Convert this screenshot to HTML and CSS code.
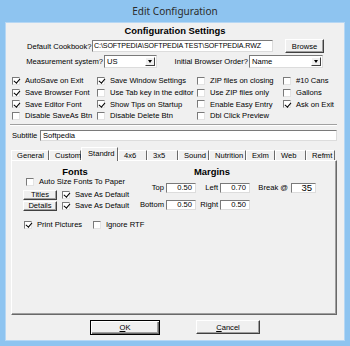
FILE: index.html
```html
<!DOCTYPE html>
<html>
  <head>
    <meta charset="UTF-8">
    <title>Edit Configuration</title>
    <link rel="stylesheet" href="styles.css">
  </head>
  <body>
  <div class="window">
    <div class="titlebar">Edit Configuration</div>
    <div class="client">
      <h1 class="heading">Configuration Settings</h1>

      <div class="row row-cookbook">
        <span class="lbl lbl-cookbook">Default Cookbook?</span>
        <div class="field field-path">C:\SOFTPEDIA\SOFTPEDIA TEST\SOFTPEDIA.RWZ</div>
        <button class="btn btn-browse">Browse</button>
      </div>

      <div class="row row-measure">
        <span class="lbl lbl-measure">Measurement system?</span>
        <div class="combo combo-measure"><span class="value">US</span><span class="drop"></span></div>
        <span class="lbl lbl-order">Initial Browser Order?</span>
        <div class="combo combo-order"><span class="value">Name</span><span class="drop"></span></div>
      </div>

      <div class="checks">
        <label class="chk"><span class="box on"></span>AutoSave on Exit</label>
        <label class="chk"><span class="box on"></span>Save Browser Font</label>
        <label class="chk"><span class="box on"></span>Save Editor Font</label>
        <label class="chk"><span class="box"></span>Disable SaveAs Btn</label>

        <label class="chk"><span class="box on"></span>Save Window Settings</label>
        <label class="chk"><span class="box"></span>Use Tab key in the editor</label>
        <label class="chk"><span class="box on"></span>Show Tips on Startup</label>
        <label class="chk"><span class="box"></span>Disable Delete Btn</label>

        <label class="chk"><span class="box"></span>ZIP files on closing</label>
        <label class="chk"><span class="box"></span>Use ZIP files only</label>
        <label class="chk"><span class="box"></span>Enable Easy Entry</label>
        <label class="chk"><span class="box"></span>Dbl Click Preview</label>

        <label class="chk"><span class="box"></span>#10 Cans</label>
        <label class="chk"><span class="box"></span>Gallons</label>
        <label class="chk"><span class="box on"></span>Ask on Exit</label>
      </div>

      <div class="etched"></div>

      <div class="row row-subtitle">
        <span class="lbl-subtitle">Subtitle</span>
        <div class="field field-subtitle">Softpedia</div>
      </div>

      <div class="tabs">
        <div class="tab t-general">General</div>
        <div class="tab t-custom">Custom</div>
        <div class="tab t-standrd active">Standrd</div>
        <div class="tab t-4x6">4x6</div>
        <div class="tab t-3x5">3x5</div>
        <div class="tab t-sound">Sound</div>
        <div class="tab t-nutrition">Nutrition</div>
        <div class="tab t-exlm">Exlm</div>
        <div class="tab t-web">Web</div>
        <div class="tab t-refmt">Refmt</div>
      </div>

      <div class="panel">
        <div class="panel-cols">
          <div class="fonts">
            <div class="group-title">Fonts</div>
            <label class="chk auto-row"><span class="box"></span>Auto Size Fonts To Paper</label>
            <div class="font-row first">
              <button class="btn btn-small">Titles</button>
              <label class="chk"><span class="box on"></span>Save As Default</label>
            </div>
            <div class="font-row">
              <button class="btn btn-small">Details</button>
              <label class="chk"><span class="box on"></span>Save As Default</label>
            </div>
          </div>

          <div class="margins">
            <div class="group-title">Margins</div>
            <div class="margin-row first">
              <span class="mlbl mlbl-a">Top</span>
              <div class="field num">0.50</div>
              <span class="mlbl mlbl-b">Left</span>
              <div class="field num">0.70</div>
              <span class="mlbl mlbl-c">Break @</span>
              <div class="field num num-break">35</div>
            </div>
            <div class="margin-row second">
              <span class="mlbl mlbl-a">Bottom</span>
              <div class="field num">0.50</div>
              <span class="mlbl mlbl-b">Right</span>
              <div class="field num">0.50</div>
            </div>
          </div>
        </div>

        <div class="print-row">
          <label class="chk"><span class="box on"></span>Print Pictures</label>
          <label class="chk"><span class="box"></span>Ignore RTF</label>
        </div>
      </div>

      <div class="actions">
        <button class="btn btn-ok"><u>O</u>K</button>
        <button class="btn btn-cancel"><u>C</u>ancel</button>
      </div>
    </div>
  </div>
  </body>
</html>
```

FILE: styles.css
```css
* {
  box-sizing: border-box;
  }

body {
  margin: 0;
  font-family: "Liberation Sans", Arial, sans-serif;
  font-size: 7.6px;
  color: #000000;
  }

.window {
  width: 350px;
  height: 346px;
  padding: 0 5px 5px;
  background-color: #8ec4f0;
  display: flex;
  flex-direction: column;
  }

.titlebar {
  height: 22px;
  line-height: 22px;
  text-align: center;
  font-family: "Noto Sans", sans-serif;
  font-size: 10px;
  color: #2b2b2b;
  }

.client {
  flex: 1;
  background-color: #f0f0f0;
  border: 1px solid #b6d7f4;
  display: flex;
  flex-direction: column;
  }

.heading {
  margin: 2px 0 0;
  font-size: 9.4px;
  font-weight: bold;
  line-height: 12px;
  text-align: center;
  }

/* rows of label + control */
.row {
  display: flex;
  align-items: center;
  }

.lbl {
  text-align: right;
  white-space: nowrap;
  padding-right: 1px;
  }

.row-cookbook {
  margin-top: 2px;
  height: 14px;
  padding-left: 21px;
  }

.lbl-cookbook { width: 65px; }

.field {
  height: 12px;
  line-height: 10px;
  padding: 0 2px;
  background-color: #ffffff;
  border: 1px solid;
  border-color: #7a7a7a #dcdcdc #dcdcdc #7a7a7a;
  white-space: nowrap;
  overflow: hidden;
  }

.field-path {
  width: 181px;
  padding-left: 1px;
  font-size: 7.1px;
  letter-spacing: -0.1px;
  }

.btn {
  padding: 0;
  font: inherit;
  color: #000000;
  text-align: center;
  background-color: #f0f0f0;
  border: 1px solid;
  border-color: #ffffff #404040 #404040 #ffffff;
  box-shadow: inset -1px -1px 0 #a0a0a0;
  }

.btn-browse {
  width: 39px;
  height: 14px;
  margin-left: 12px;
  }

.row-measure {
  margin-top: 2px;
  height: 13px;
  padding-left: 20px;
  }

.lbl-measure { width: 78px; }

.lbl-order {
  width: 78px;
  margin-left: 14px;
  }

.combo {
  height: 13px;
  padding-left: 2px;
  display: flex;
  align-items: center;
  background-color: #ffffff;
  border: 1px solid;
  border-color: #7a7a7a #dcdcdc #dcdcdc #7a7a7a;
  }

.combo-measure { width: 53px; }
.combo-order { width: 74px; }

.combo .value { flex: 1; }

.drop {
  width: 10px;
  height: 9px;
  margin-right: 1px;
  display: flex;
  align-items: center;
  justify-content: center;
  background-color: #f0f0f0;
  border: 1px solid;
  border-color: #ffffff #404040 #404040 #ffffff;
  }

.drop::after {
  content: "";
  border-style: solid;
  border-width: 3px 2.5px 0 2.5px;
  border-color: #000000 transparent transparent transparent;
  }

/* checkboxes */
.chk {
  display: flex;
  align-items: center;
  gap: 5px;
  white-space: nowrap;
  }

.box {
  flex: none;
  position: relative;
  width: 8px;
  height: 8px;
  background-color: #ffffff;
  border: 1px solid;
  border-color: #7a7a7a #e3e3e3 #e3e3e3 #7a7a7a;
  }

.box.on::after {
  content: "";
  position: absolute;
  left: 2px;
  top: -0.5px;
  width: 2.5px;
  height: 5px;
  border: solid #000000;
  border-width: 0 1.5px 1.5px 0;
  transform: rotate(40deg);
  }

.checks {
  margin-top: 7px;
  padding-left: 6px;
  display: grid;
  grid-template-columns: 85px 100px 86px 1fr;
  grid-template-rows: repeat(4, 11.7px);
  grid-auto-flow: column;
  }

.etched {
  margin: 2px 7px 0 4px;
  height: 2px;
  border-top: 1px solid #a0a0a0;
  border-bottom: 1px solid #ffffff;
  }

.row-subtitle {
  margin-top: 4px;
  height: 11px;
  padding-left: 6px;
  }

.lbl-subtitle { width: 28px; }

.field-subtitle {
  width: 297px;
  height: 11px;
  line-height: 9px;
  }

/* tabs */
.tabs {
  margin-top: 6px;
  height: 13px;
  padding-left: 5px;
  display: flex;
  align-items: flex-start;
  position: relative;
  z-index: 1;
  }

.tab {
  margin-top: 3px;
  height: 10px;
  padding-left: 5px;
  line-height: 9px;
  white-space: nowrap;
  border-top: 1px solid #ffffff;
  border-left: 1px solid #ffffff;
  border-right: 1px solid #696969;
  }

.tab.active {
  margin-top: 0;
  height: 14px;
  line-height: 11px;
  padding-left: 6px;
  background-color: #f0f0f0;
  }

.t-general { width: 38px; }
.t-custom { width: 32px; }
.t-standrd { width: 37px; }
.t-4x6 { width: 29px; }
.t-3x5 { width: 31px; }
.t-sound { width: 31px; }
.t-nutrition { width: 37px; }
.t-exlm { width: 29px; }
.t-web { width: 31px; }
.t-refmt { width: 29px; }

.panel {
  margin-left: 5px;
  width: 326px;
  height: 155px;
  padding-top: 5px;
  border-top: 1px solid #ffffff;
  border-left: 1px solid #ffffff;
  border-right: 1px solid #696969;
  border-bottom: 1px solid #696969;
  box-shadow: inset -1px -1px 0 #a0a0a0;
  }

.panel-cols {
  display: flex;
  }

.group-title {
  font-size: 9.4px;
  font-weight: bold;
  line-height: 11px;
  text-align: center;
  }

.fonts {
  width: 126px;
  display: flex;
  flex-direction: column;
  }

.auto-row {
  height: 10px;
  padding-left: 14px;
  }

.font-row {
  margin-top: 1px;
  height: 10px;
  padding-left: 11px;
  display: flex;
  align-items: center;
  gap: 5px;
  }

.font-row.first { margin-top: 3px; }

.btn-small {
  width: 34px;
  height: 10.5px;
  line-height: 8px;
  }

.margins .group-title { width: 148px; }

.margin-row {
  height: 10px;
  display: flex;
  align-items: center;
  }

.margin-row.first { margin-top: 6px; }
.margin-row.second { margin-top: 7px; }

.mlbl {
  text-align: right;
  white-space: nowrap;
  padding-right: 2px;
  }

.mlbl-a { width: 28px; }
.mlbl-b { width: 24px; }
.mlbl-c { width: 41px; padding-right: 3px; }

.num {
  width: 30px;
  height: 10.5px;
  line-height: 8px;
  text-align: right;
  padding-right: 3px;
  }

.num-break {
  width: 25px;
  font-size: 9.5px;
  }

.print-row {
  margin-top: 9px;
  height: 10px;
  padding-left: 12px;
  display: grid;
  grid-template-columns: 69px auto;
  }

/* OK / Cancel */
.actions {
  margin-top: 5px;
  padding-left: 84px;
  display: flex;
  align-items: center;
  }

.btn-ok {
  width: 70px;
  height: 15px;
  border-color: #000000;
  box-shadow: inset 1px 1px 0 #ffffff, inset -1px -1px 0 #696969, inset -2px -2px 0 #a0a0a0;
  }

.btn-cancel {
  width: 64px;
  height: 14px;
  margin-left: 36px;
  }
```
